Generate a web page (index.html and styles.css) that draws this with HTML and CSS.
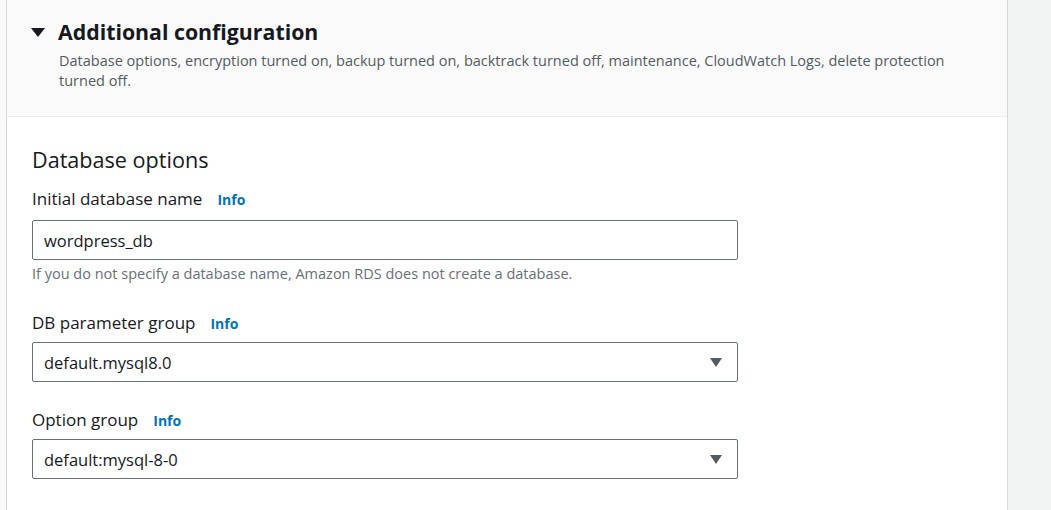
FILE: index.html
```html
<!DOCTYPE html>
<html lang="en">
<head>
<meta charset="utf-8">
<title>Additional configuration</title>
<link rel="stylesheet" href="styles.css">
</head>
<body>
<div class="page">
  <div class="gutter"></div>
  <section class="panel">
    <header class="panel-header">
      <div class="title-row">
        <svg class="toggle" width="14" height="10" viewBox="0 0 14 10" aria-hidden="true"><polygon points="0,0 14,0 7,9" fill="#16191f"/></svg>
        <h2 class="title">Additional configuration</h2>
      </div>
      <p class="description">Database options, encryption turned on, backup turned on, backtrack turned off, maintenance, CloudWatch Logs, delete protection turned off.</p>
    </header>
    <div class="panel-body">
      <h3 class="section-title">Database options</h3>

      <div class="field field-first">
        <div class="label-row"><span class="label">Initial database name</span><a class="info">Info</a></div>
        <div class="input">wordpress_db</div>
        <div class="hint">If you do not specify a database name, Amazon RDS does not create a database.</div>
      </div>

      <div class="field field-second">
        <div class="label-row"><span class="label">DB parameter group</span><a class="info">Info</a></div>
        <div class="input select"><span>default.mysql8.0</span><svg class="caret" width="12" height="9" viewBox="0 0 12 9" aria-hidden="true"><polygon points="0,0 12,0 6,9" fill="#545b64"/></svg></div>
      </div>

      <div class="field field-third">
        <div class="label-row"><span class="label">Option group</span><a class="info">Info</a></div>
        <div class="input select"><span>default:mysql-8-0</span><svg class="caret" width="12" height="9" viewBox="0 0 12 9" aria-hidden="true"><polygon points="0,0 12,0 6,9" fill="#545b64"/></svg></div>
      </div>
    </div>
  </section>
  <div class="aside"></div>
</div>
</body>
</html>
```

FILE: styles.css
```css
html, body {
  margin: 0;
  padding: 0;
}

body {
  font-family: "Open Sans", "Noto Sans", Arial, sans-serif;
  color: #16191f;
  background: #f2f3f3;
}

.page {
  display: flex;
  height: 510px;
  overflow: hidden;
}

.gutter {
  width: 6px;
  flex: none;
  background: #f9f9f9;
}

.panel {
  width: 1000px;
  flex: none;
  border-left: 1px solid #d5dbdb;
  border-right: 1px solid #d5dbdb;
  background: #ffffff;
}

.aside {
  flex: 1;
  background: #f2f3f3;
}

.panel-header {
  background: #fafafa;
  border-bottom: 1px solid #eaeded;
  padding: 20px 20px 25px 24px;
}

.title-row {
  display: flex;
  align-items: center;
  gap: 13px;
}

.toggle {
  display: block;
  margin-top: 1px;
}

.title {
  margin: 0;
  font-size: 21.3px;
  line-height: 24px;
  font-weight: 700;
  color: #16191f;
}

.description {
  margin: 7px 0 0 28px;
  max-width: 900px;
  font-size: 14.5px;
  line-height: 20px;
  color: #545b64;
}

.panel-body {
  padding: 31px 25px 0 25px;
}

.section-title {
  margin: 0;
  font-size: 21.6px;
  line-height: 24px;
  font-weight: 400;
  color: #16191f;
}

.field-first { margin-top: 16px; }
.field-second { margin-top: 28px; }
.field-third { margin-top: 27px; }

.label-row {
  display: flex;
  align-items: baseline;
  gap: 15px;
  height: 22px;
}

.label {
  font-size: 17px;
  line-height: 22px;
  color: #16191f;
}

.info {
  font-size: 14px;
  font-weight: 700;
  color: #0073bb;
}

.input {
  box-sizing: border-box;
  width: 706px;
  height: 40px;
  margin-top: 10px;
  border: 1px solid #687078;
  border-radius: 2px;
  padding: 0 15px 0 11px;
  display: flex;
  align-items: center;
  font-size: 16.5px;
  color: #16191f;
}

.field-second .input,
.field-third .input {
  margin-top: 8px;
}

.select {
  justify-content: space-between;
}

.caret {
  display: block;
}

.hint {
  margin-top: 4px;
  font-size: 14.5px;
  line-height: 20px;
  color: #687078;
}
```
